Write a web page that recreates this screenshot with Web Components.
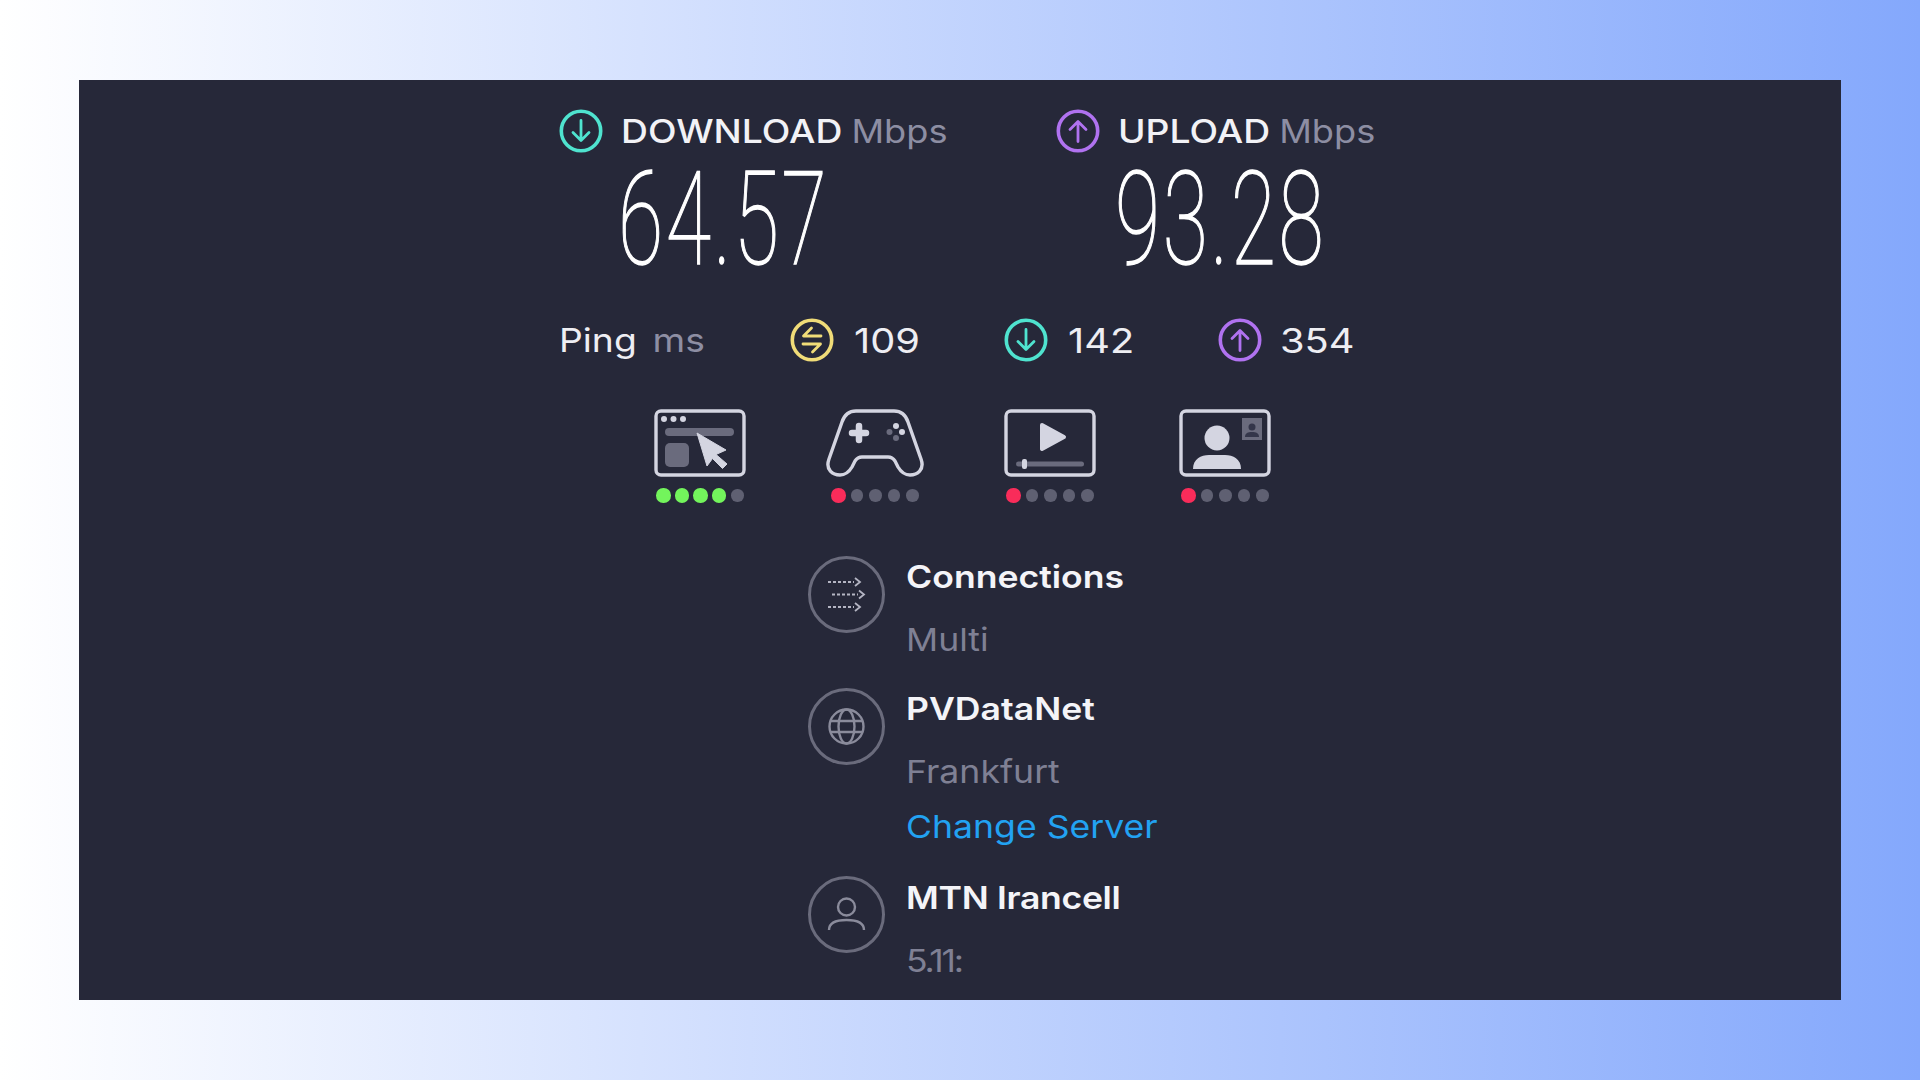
<!DOCTYPE html>
<html>
<head>
<meta charset="utf-8">
<title>Speed test</title>
<style>
    html, body { margin: 0; height: 100%; }
    body {
        display: flex;
        box-sizing: border-box;
        height: 1080px;
        padding: 80px 79px 80px 79px;
        background: linear-gradient(90deg, #ffffff 0%, #84a8fc 100%);
        font-family: Inter, "Liberation Sans", sans-serif;
    }
</style>
</head>
<body>
<speed-panel>
    <speed-head>
        <speed-stat label="DOWNLOAD" value="64.57" dir="down"></speed-stat>
        <speed-stat label="UPLOAD" value="93.28" dir="up"></speed-stat>
    </speed-head>
    <ping-row>
        <ping-item dir="both" value="109"></ping-item>
        <ping-item dir="down" value="142"></ping-item>
        <ping-item dir="up" value="354"></ping-item>
    </ping-row>
    <app-row>
        <app-quality kind="web" score="4" tone="good"></app-quality>
        <app-quality kind="game" score="1" tone="bad"></app-quality>
        <app-quality kind="video" score="1" tone="bad"></app-quality>
        <app-quality kind="call" score="1" tone="bad"></app-quality>
    </app-row>
    <info-row icon="arrows" title="Connections" detail="Multi"></info-row>
    <info-row icon="globe" title="PVDataNet" detail="Frankfurt" link="Change Server"></info-row>
    <info-row icon="user" title="MTN Irancell" detail="5.11:" tight></info-row>
</speed-panel>

<script>
const ringPaths = {
	down: { color: "#4fe3cf", d: "M22 11.5V31M14 23.5l8 8 8-8" },
	up: { color: "#b072f0", d: "M22 32.5V13M14 20.5l8-8 8 8" },
	both: { color: "#f0dc78", d: "M31 18H13.5l8-8M13 26h17.5l-8 8" },
};

function ringIcon(dir) {
	const p = ringPaths[dir];
	return `<svg width="44" height="44" viewBox="0 0 44 44" fill="none" stroke="${p.color}">
        <circle cx="22" cy="22" r="19.7" stroke-width="3.6"/>
        <path d="${p.d}" stroke-width="2.8" stroke-linecap="round" stroke-linejoin="round"/>
    </svg>`;
}

const panelTemplate = document.createElement("template");
panelTemplate.innerHTML = `
    <style>
        :host {
            flex: 1;
            display: flex;
            flex-direction: column;
            box-sizing: border-box;
            padding: 0 0 0 480px;
            background-color: #262839;
            overflow: hidden;
        }
    </style>
    <slot></slot>
`;

class SpeedPanel extends HTMLElement {
	constructor() {
		super();
		this.attachShadow({ mode: "open" });
		this.shadowRoot.appendChild(panelTemplate.content.cloneNode(true));
	}
}

const headTemplate = document.createElement("template");
headTemplate.innerHTML = `
    <style>
        :host {
            display: grid;
            grid-template-columns: 497px 497px;
            padding-top: 29px;
        }
    </style>
    <slot></slot>
`;

class SpeedHead extends HTMLElement {
	constructor() {
		super();
		this.attachShadow({ mode: "open" });
		this.shadowRoot.appendChild(headTemplate.content.cloneNode(true));
	}
}

const statTemplate = document.createElement("template");
statTemplate.innerHTML = `
    <style>
        :host { display: block; }
        .top {
            display: flex;
            align-items: center;
            height: 44px;
            gap: 18px;
            font-size: 33px;
            font-weight: 500;
            color: #f2f2f6;
            white-space: nowrap;
        }
        .wide { display: block; transform: scaleX(1.13); transform-origin: left center; }
        .unit { color: #8d8ea3; font-size: 32px; font-weight: 400; margin-left: 8px; }
        .num {
            display: block;
            margin: 12px 0 0 59px;
            height: 110px;
            font-family: Roboto, sans-serif;
            font-weight: 100;
            font-size: 130px;
            line-height: 110px;
            letter-spacing: 4px;
            color: #fff;
            white-space: nowrap;
            -webkit-text-stroke: 1.400px #fff;
            transform: scaleX(0.635);
            transform-origin: left center;
        }
    </style>
    <div class="top"><span id="icon" style="display:flex"></span><span class="wide"><span id="label"></span><span class="unit">Mbps</span></span></div>
    <span class="num" id="value"></span>
`;

class SpeedStat extends HTMLElement {
	constructor() {
		super();
		this.attachShadow({ mode: "open" });
		this.shadowRoot.appendChild(statTemplate.content.cloneNode(true));
	}

	connectedCallback() {
		this.shadowRoot.querySelector("#icon").innerHTML = ringIcon(this.getAttribute("dir"));
		this.shadowRoot.querySelector("#label").textContent = this.getAttribute("label");
		this.shadowRoot.querySelector("#value").textContent = this.getAttribute("value");
	}
}

const pingRowTemplate = document.createElement("template");
pingRowTemplate.innerHTML = `
    <style>
        :host {
            display: flex;
            align-items: center;
            height: 44px;
            margin-top: 43px;
            font-size: 33px;
            color: #eeeef3;
        }
        .ping { width: 231px; white-space: nowrap; }
        .wide { display: block; transform: scaleX(1.13); transform-origin: left center; }
        .ms { color: #8d8ea3; margin-left: 14px; }
    </style>
    <span class="ping"><span class="wide">Ping<span class="ms">ms</span></span></span>
    <slot></slot>
`;

class PingRow extends HTMLElement {
	constructor() {
		super();
		this.attachShadow({ mode: "open" });
		this.shadowRoot.appendChild(pingRowTemplate.content.cloneNode(true));
	}
}

const pingItemTemplate = document.createElement("template");
pingItemTemplate.innerHTML = `
    <style>
        :host {
            display: flex;
            align-items: center;
            gap: 20px;
            width: 214px;
        }
        :host(:last-child) { gap: 18px; }
        #icon { display: flex; }
        #value { display: block; font-size: 34px; transform: scaleX(1.17); transform-origin: left center; }
    </style>
    <span id="icon"></span><span id="value"></span>
`;

class PingItem extends HTMLElement {
	constructor() {
		super();
		this.attachShadow({ mode: "open" });
		this.shadowRoot.appendChild(pingItemTemplate.content.cloneNode(true));
	}

	connectedCallback() {
		this.shadowRoot.querySelector("#icon").innerHTML = ringIcon(this.getAttribute("dir"));
		this.shadowRoot.querySelector("#value").textContent = this.getAttribute("value");
	}
}

const appRowTemplate = document.createElement("template");
appRowTemplate.innerHTML = `
    <style>
        :host {
            display: grid;
            grid-template-columns: repeat(4, 175px);
            margin: 47px 0 22px 53px;
        }
    </style>
    <slot></slot>
`;

class AppRow extends HTMLElement {
	constructor() {
		super();
		this.attachShadow({ mode: "open" });
		this.shadowRoot.appendChild(appRowTemplate.content.cloneNode(true));
	}
}

const L = "#d4d5e1";
const G = "#6a6b7d";
const frame = `<rect x="2" y="2" width="88" height="64" rx="5" fill="none" stroke="${L}" stroke-width="3.4"/>`;
const appIcons = {
	web: `<svg width="92" height="68" viewBox="0 0 92 68">${frame}
        <circle cx="10" cy="10" r="3" fill="${L}"/><circle cx="19.500" cy="10" r="3" fill="${L}"/><circle cx="29" cy="10" r="3" fill="${L}"/>
        <rect x="11" y="19" width="69" height="8" rx="4" fill="${G}"/>
        <rect x="11" y="34" width="24" height="24" rx="5" fill="${G}"/>
        <path d="M43 24L72 41l-10 4.500 11 9.500-4.500 4.500-10-10L53 57z" fill="${L}" stroke="${L}" stroke-linejoin="round"/>
    </svg>`,
	game: `<svg width="98" height="68" viewBox="0 0 98 68">
        <path d="M30 2H68C76 2 80 7 82 13L95 50C99 61 91 66 84 66C78 66 75 63 72 58L69 52C67 49 65 48 62 48H36C33 48 31 49 29 52L26 58C23 63 20 66 14 66C7 66-1 61 3 50L16 13C18 7 22 2 30 2Z" fill="none" stroke="${L}" stroke-width="3.4"/>
        <path d="M33 17v14M26 24h14" stroke="${L}" stroke-width="6.500" stroke-linecap="round"/>
        <circle cx="70" cy="17" r="3" fill="${L}"/><circle cx="76" cy="23" r="3" fill="${L}"/>
        <circle cx="70" cy="29" r="3" fill="${G}"/><circle cx="63.500" cy="23" r="3" fill="${G}"/>
    </svg>`,
	video: `<svg width="92" height="68" viewBox="0 0 92 68">${frame}
        <path d="M38 16L60 28 38 40z" fill="${L}" stroke="${L}" stroke-width="4" stroke-linejoin="round"/>
        <rect x="12" y="52.500" width="68" height="5" rx="2.500" fill="${G}"/>
        <rect x="18" y="50" width="5" height="10" rx="2" fill="${L}"/>
    </svg>`,
	call: `<svg width="92" height="68" viewBox="0 0 92 68">${frame}
        <circle cx="38" cy="29" r="12.500" fill="${L}"/>
        <path d="M14 60C14 50 22 46 30 46H46C54 46 62 50 62 60z" fill="${L}"/>
        <rect x="63" y="9" width="20" height="22" fill="${G}"/>
        <circle cx="73" cy="18" r="3.500" fill="#34364a"/>
        <path d="M66 28c0-4 3-5 7-5s7 1 7 5z" fill="#34364a"/>
    </svg>`,
};

const appTemplate = document.createElement("template");
appTemplate.innerHTML = `
    <style>
        :host {
            display: flex;
            flex-direction: column;
            align-items: center;
            gap: 12px;
        }
        #icon { display: flex; height: 68px; align-items: center; }
        .dots { display: grid; grid-template-columns: repeat(5, 18.400px); place-items: center; height: 15px; margin-left: 2px; margin-top: -1px; }
        .dot { width: 12.500px; height: 12.500px; border-radius: 50%; background-color: #5f6072; }
        .on { width: 14.500px; height: 14.500px; }
        .good { background-color: #73f45c; }
        .bad { background-color: #f92c5a; }
    </style>
    <span id="icon"></span>
    <div class="dots" id="dots"></div>
`;

class AppQuality extends HTMLElement {
	constructor() {
		super();
		this.attachShadow({ mode: "open" });
		this.shadowRoot.appendChild(appTemplate.content.cloneNode(true));
	}

	connectedCallback() {
		const score = Number(this.getAttribute("score"));
		const tone = this.getAttribute("tone");
		this.shadowRoot.querySelector("#icon").innerHTML = appIcons[this.getAttribute("kind")];
		let dots = "";
		for (let i = 0; i < 5; i++) {
			dots += `<span class="dot ${i < score ? "on " + tone : ""}"></span>`;
		}
		this.shadowRoot.querySelector("#dots").innerHTML = dots;
	}
}

const infoIcons = {
	arrows: `<g stroke="#b4b5c3" stroke-width="1.800">
        <path d="M20 26h26M24 38.500h26M20 51h26" stroke-dasharray="3 2"/>
        <path d="M47 22l5 4-5 4M51 34.500l5 4-5 4M47 47l5 4-5 4"/>
    </g>`,
	globe: `<g stroke="#8a8b9b" stroke-width="2.400"><circle cx="38.500" cy="38.500" r="17"/><ellipse cx="38.500" cy="38.500" rx="8" ry="17"/><path d="M22.500 33h32M22.500 44h32"/></g>`,
	user: `<g stroke="#8a8b9b" stroke-width="2.400"><circle cx="38.500" cy="31" r="8.500"/><path d="M21 54c0-7 7-10 17.500-10S56 47 56 54"/></g>`,
};

const infoTemplate = document.createElement("template");
infoTemplate.innerHTML = `
    <style>
        :host {
            display: flex;
            align-items: flex-start;
            gap: 21px;
            margin-left: 249px;
            margin-top: 30.500px;
            font-size: 31.500px;
        }
        #icon { display: flex; flex: none; }
        .text { display: flex; flex-direction: column; padding-top: 3px; }
        .text span { display: block; white-space: nowrap; transform: scaleX(1.13); transform-origin: left center; }
        .title { font-weight: 600; color: #f4f4f8; line-height: 36px; }
        .detail { color: #7f8094; line-height: 36px; margin-top: 27px; }
        .link { color: #22a2f2; line-height: 36px; margin-top: 19px; }
        :host([tight]) .title { margin-top: 1px; letter-spacing: -0.300px; }
        :host([tight]) .detail { letter-spacing: -2px; }
    </style>
    <span id="icon"></span>
    <div class="text">
        <span class="title" id="title"></span>
        <span class="detail" id="detail"></span>
        <span class="link" id="link"></span>
    </div>
`;

class InfoRow extends HTMLElement {
	constructor() {
		super();
		this.attachShadow({ mode: "open" });
		this.shadowRoot.appendChild(infoTemplate.content.cloneNode(true));
	}

	connectedCallback() {
		this.shadowRoot.querySelector("#icon").innerHTML = `<svg width="77" height="77" viewBox="0 0 77 77" fill="none" stroke="#6a6b7c">
            <circle cx="38.500" cy="38.500" r="37" stroke-width="3"/>${infoIcons[this.getAttribute("icon")]}</svg>`;
		this.shadowRoot.querySelector("#title").textContent = this.getAttribute("title");
		this.shadowRoot.querySelector("#detail").textContent = this.getAttribute("detail");
		const link = this.shadowRoot.querySelector("#link");
		if (this.hasAttribute("link")) link.textContent = this.getAttribute("link");
		else link.remove();
	}
}

customElements.define("speed-panel", SpeedPanel);
customElements.define("speed-head", SpeedHead);
customElements.define("speed-stat", SpeedStat);
customElements.define("ping-row", PingRow);
customElements.define("ping-item", PingItem);
customElements.define("app-row", AppRow);
customElements.define("app-quality", AppQuality);
customElements.define("info-row", InfoRow);
</script>
</body>
</html>
